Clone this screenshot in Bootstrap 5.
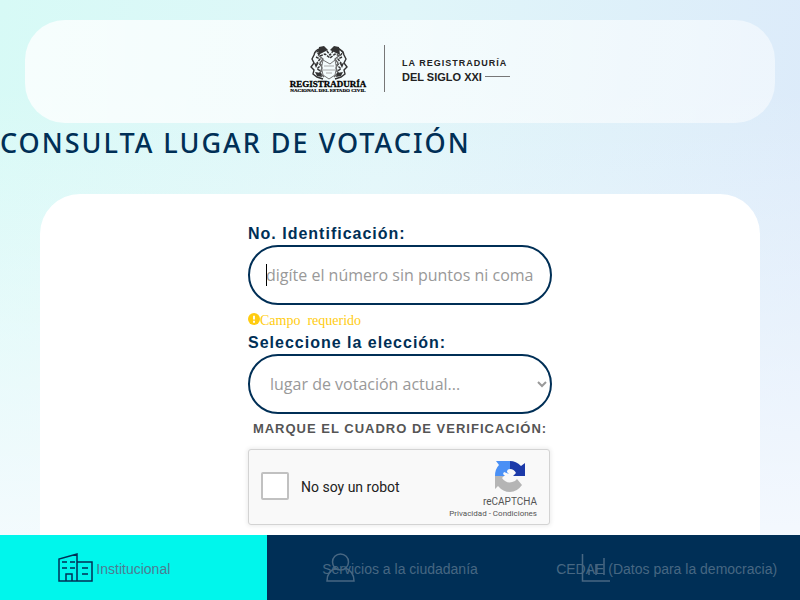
<!DOCTYPE html>
<html lang="es">
<head>
<meta charset="utf-8">
<meta name="viewport" content="width=device-width, initial-scale=1">
<title>Consulta lugar de votación</title>
<link href="https://cdn.jsdelivr.net/npm/bootstrap@5.3.0/dist/css/bootstrap.min.css" rel="stylesheet">
<style>
  :root { --navy: #002f56; --aqua: #00f6ec; }
  body {
    font-family: "Liberation Sans", Arial, sans-serif;
    background:
      linear-gradient(to bottom, rgba(248,251,255,0) 15%, rgba(248,251,255,.9) 95%),
      linear-gradient(100deg, #d7faf6 0%, #e0f6f9 45%, #dceafa 95%);
  }
  .site-header { margin: 20px 25px 0; height: 103px; border-radius: 40px; background: linear-gradient(90deg, rgba(255,255,255,.78), rgba(255,255,255,.5)); padding-top: 24px; }
  .page-title { font: 500 27px/40px "Noto Sans", sans-serif; letter-spacing: 2px; color: var(--navy); margin-bottom: 31px; }
  .panel { margin: 0 40px; border-radius: 40px 40px 0 0; padding-top: 29px; }
  .vote-form { width: 304px; }
  .field-label { font-weight: 700; font-size: 16px; line-height: 22px; letter-spacing: 1px; color: var(--navy); }
  .pill { height: 60px; border: 2px solid var(--navy); border-radius: 30px; color: #999; font: 16px "Open Sans", sans-serif; background: #fff; outline: 0; }
  input.pill { padding: 0 16px; }
  input.pill::placeholder { color: #999; }
  select.pill { padding: 0 0 0 16px; }
  .caret { left: 18px; top: 19px; width: 1px; height: 22px; background: #000; }
  .required-note { font: 14px/16px "Liberation Serif", serif; color: #fc1; margin-top: 8px; height: 19px; }
  .verify { font-weight: 700; font-size: 13px; line-height: 20px; letter-spacing: 1px; color: #555; margin: 5px 0 10px; }
  .captcha { width: 302px; height: 76px; background: #f9f9f9; border: 1px solid #d3d3d3; border-radius: 3px; box-shadow: 0 0 4px 1px rgba(0,0,0,.08); font-family: Roboto, sans-serif; padding: 0 12px; }
  .captcha input { appearance: none; width: 28px; height: 28px; border: 2px solid #c1c1c1; border-radius: 2px; background: #fff; margin: 0 12px 3px 0; }
  .captcha label { font-size: 14px; color: #222; }
  .captcha-brand { font-size: 10px; line-height: 12px; color: #555; padding-top: 10px; }
  .captcha-brand svg { margin: 0 11px 4px 0; }
  .captcha-links { font-size: 8px; line-height: 12px; }
  .captcha-brand a { color: #555; text-decoration: none; }
  .dock { height: 65px; background: var(--navy); font-size: 14px; }
  .dock a { color: #476782; text-decoration: none; padding-top: 3px; }
  .dock a.current { background: var(--aqua); color: #4d7c92; }
  .dock svg { left: 58px; top: 18px; fill: none; stroke: currentColor; }
  .dock .current svg { color: var(--navy); }
  .dock .chart { left: 48px; }
</style>
</head>
<body class="min-vh-100 d-flex flex-column">
<header class="site-header text-center">
  <svg width="222" height="52" viewBox="0 0 222 52" role="img" aria-label="Registraduría Nacional del Estado Civil" class="d-block mx-auto">
    <g fill="none" stroke="#333" stroke-width="1.4">
      <path d="M31 5q-5 1-6 6l-2 4 2 4-3 4 3 3-1 4 4 3 6 2"/>
      <path d="M49 5q5 1 6 6l2 4-2 4 3 4-3 3 1 4-4 3-6 2"/>
      <path d="M28 8l5-4 5 3 3 4 3-4 5-3 5 4-3 4-5-2-5 4-5-4-5 2zM27 13l4 2-3 4 4 2-4 4 4 2-2 4M53 13l-4 2 3 4-4 2 4 4-4 2 2 4" stroke-dasharray="3 1"/>
      <path d="M29 11l5 4-3 4 2 5-2 5 4 4M51 11l-5 4 3 4-2 5 2 5-4 4" stroke="#666"/>
      <path d="M34 16q-3 8 0 15l6 4 6-4q3-7 0-15l-5 4z" stroke="#777" stroke-width="1"/>
      <path d="M35 22h10M34 26h12M37 29h6" stroke="#aaa" stroke-width="1"/>
    </g>
    <path d="M30 3l5-1 4 4-4 2-6 3zM50 3l-5-1-4 4 4 2 6 3zM25 19l4 1-2 4zM55 19l-4 1 2 4zM26 28l6 1 1 4-5-1zM54 28l-6 1-1 4 5-1z" fill="#333"/>
    <path d="M95.500 1v47" stroke="#777"/>
    <g font-family="Liberation Serif, serif" font-weight="700" fill="#000">
      <text x="39" y="43" font-size="9" text-anchor="middle" stroke="#000" stroke-width=".3">REGISTRADURÍA</text>
      <text x="39" y="48" font-size="5" text-anchor="middle" stroke="#000" stroke-width=".2">NACIONAL DEL ESTADO CIVIL</text>
    </g>
    <g font-family="Liberation Sans, sans-serif" font-weight="700" fill="#222">
      <text x="113" y="22" font-size="9" letter-spacing="1">LA REGISTRADURÍA</text>
      <text x="113" y="37" font-size="11">DEL SIGLO XXI</text>
    </g>
    <path d="M196 32.500h25" stroke="#777"/>
  </svg>
</header>

<h1 class="page-title">CONSULTA LUGAR DE VOTACIÓN</h1>

<main class="panel bg-white flex-grow-1">
  <form class="vote-form mx-auto">
    <label class="field-label d-block" for="idnum">No. Identificación:</label>
    <div class="position-relative">
      <input class="pill w-100 d-block" id="idnum" type="text" placeholder="digíte el número sin puntos ni coma">
      <span class="caret position-absolute" aria-hidden="true"></span>
    </div>
    <div class="required-note d-flex">
      <svg width="12" height="12" viewBox="0 0 13 13" aria-hidden="true"><circle cx="6.500" cy="6.500" r="6.500" fill="#fc1"/><path d="M6.500 3v4M6.500 8.500v2" stroke="#fff" stroke-width="2"/></svg>
      <span>Campo&nbsp; requerido</span>
    </div>
    <label class="field-label d-block" for="election">Seleccione la elección:</label>
    <select class="pill w-100 d-block" id="election"><option>lugar de votación actual...</option></select>
    <p class="verify text-center text-nowrap">MARQUE EL CUADRO DE VERIFICACIÓN:</p>
    <div class="captcha d-flex align-items-center">
      <input type="checkbox" id="robot">
      <label for="robot" class="me-auto">No soy un robot</label>
      <div class="captcha-brand d-flex flex-column align-items-end align-self-start">
        <svg width="32" height="32" viewBox="0 0 32 32" aria-hidden="true">
          <path fill="#4a90f5" d="M16 1v8q-3 0-3 3l2 2-5-2-1 2 2 2H1Q1 9 5 5L2 1z"/>
          <path fill="#1c3aa9" d="M16 1q6 0 11 5l4-3v13H19l3-3q-2-4-6-4z"/>
          <path fill="#b5b5b5" d="M1 16h9l-2 2q5 7 13 3l2-2 5 6q-5 7-12 7-7 0-12-6l-3 3z"/>
        </svg>
        <div>reCAPTCHA</div>
        <div class="captcha-links"><a href="#">Privacidad</a> - <a href="#">Condiciones</a></div>
      </div>
    </div>
  </form>
</main>

<nav class="dock row g-0 w-100">
  <a href="#" class="current col-4 position-relative d-flex align-items-center justify-content-center">
    <svg class="position-absolute" width="36" height="30" viewBox="0 0 36 30" stroke-width="1.500" aria-hidden="true"><path d="M1 28V6l18-5v27zM19 9h15v19H19M8 28v-7h6v7M4 9h5M12 9h5M4 15h5M12 15h5M24 15h6M24 21h6"/></svg>
    Institucional
  </a>
  <a href="#" class="col-4 position-relative d-flex align-items-center justify-content-center">
    <svg class="position-absolute" width="32" height="30" viewBox="0 0 32 30" stroke-width="1.500" aria-hidden="true"><circle cx="15.500" cy="9" r="8"/><path d="M11 15Q2 18 2 28h27q0-10-9-13"/></svg>
    Servicios a la ciudadanía
  </a>
  <a href="#" class="col-4 position-relative d-flex align-items-center justify-content-center">
    <svg class="chart position-absolute" width="30" height="30" viewBox="0 0 30 30" stroke-width="1.500" aria-hidden="true"><path d="M1.500 1v27H29M8 22v-6M15 22V11M23 22V5"/></svg>
    CEDAE (Datos para la democracia)
  </a>
</nav>
<script src="https://cdn.jsdelivr.net/npm/bootstrap@5.3.0/dist/js/bootstrap.bundle.min.js"></script>
</body>
</html>
